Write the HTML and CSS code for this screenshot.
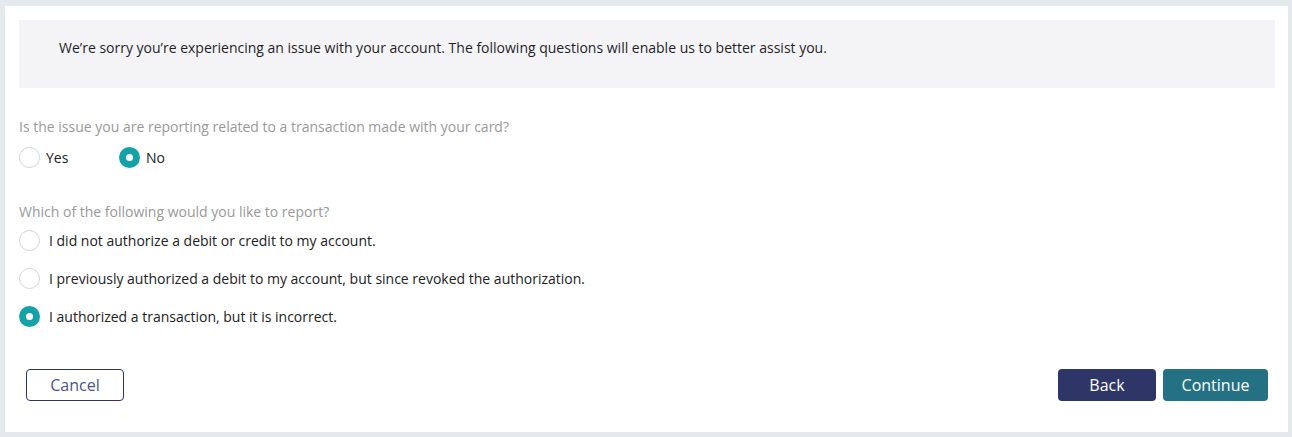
FILE: index.html
```html
<!DOCTYPE html>
<html lang="en">
<head>
<meta charset="utf-8">
<title>Report an issue</title>
<link rel="stylesheet" href="styles.css">
</head>
<body>
<div class="panel">
  <div class="notice">We’re sorry you’re experiencing an issue with your account. The following questions will enable us to better assist you.</div>

  <div class="question q1">Is the issue you are reporting related to a transaction made with your card?</div>
  <div class="inline-options">
    <label class="opt yes"><span class="radio"></span><span>Yes</span></label>
    <label class="opt"><span class="radio checked"></span><span>No</span></label>
  </div>

  <div class="question q2">Which of the following would you like to report?</div>
  <div class="stack-options">
    <label class="opt wide"><span class="radio"></span><span>I did not authorize a debit or credit to my account.</span></label>
    <label class="opt wide"><span class="radio"></span><span>I previously authorized a debit to my account, but since revoked the authorization.</span></label>
    <label class="opt wide"><span class="radio checked"></span><span>I authorized a transaction, but it is incorrect.</span></label>
  </div>

  <div class="actions">
    <button class="btn cancel">Cancel</button>
    <div class="right">
      <button class="btn back">Back</button>
      <button class="btn continue">Continue</button>
    </div>
  </div>
</div>
</body>
</html>
```
FILE: styles.css
```css
html, body {
  margin: 0;
  padding: 0;
  background: #e4e9ec;
}
body {
  padding: 6px 4px 5px 5px;
  font-family: "Open Sans", "Noto Sans", sans-serif;
  font-size: 14px;
  color: #222;
}
.panel {
  background: #fff;
  padding: 14px 13px 31px 14px;
  height: 426px;
  box-sizing: border-box;
}
.notice {
  background: #f4f4f6;
  height: 68px;
  box-sizing: border-box;
  padding: 19px 40px 0 40px;
  line-height: 18px;
  color: #1f1f2a;
}
.question {
  color: #999;
  line-height: 18px;
}
.q1 { margin-top: 30px; }
.q2 { margin-top: 35px; }
.inline-options {
  display: flex;
  margin-top: 11px;
}
.opt {
  display: flex;
  align-items: center;
  height: 21px;
  line-height: 18px;
  color: #222;
}
.opt .radio {
  width: 21px;
  height: 21px;
  box-sizing: border-box;
  border: 1px solid #d0d5da;
  border-radius: 50%;
  margin-right: 6px;
  flex: none;
  position: relative;
}
.opt.wide .radio { margin-right: 9px; }
.opt.yes { width: 100px; }
.radio.checked {
  border: none;
  background: #12a2a7;
}
.radio.checked::after {
  content: "";
  position: absolute;
  left: 7px;
  top: 7px;
  width: 7px;
  height: 7px;
  border-radius: 50%;
  background: #fff;
}
.stack-options {
  display: flex;
  flex-direction: column;
  gap: 17px;
  margin-top: 9px;
}
.actions {
  display: flex;
  justify-content: space-between;
  padding: 0 7px 0 7px;
  margin-top: 42px;
}
.right {
  display: flex;
  gap: 7px;
}
.btn {
  font-family: "Open Sans", "Noto Sans", sans-serif;
  font-size: 16px;
  height: 32px;
  border-radius: 4px;
  box-sizing: border-box;
  padding: 0;
  cursor: pointer;
}
.cancel {
  width: 98px;
  background: #fff;
  border: 1px solid #2e3567;
  color: #4a5590;
}
.back {
  width: 98px;
  background: #2e3567;
  border: none;
  color: #fff;
}
.continue {
  width: 105px;
  background: #237182;
  border: none;
  color: #fff;
}
```
